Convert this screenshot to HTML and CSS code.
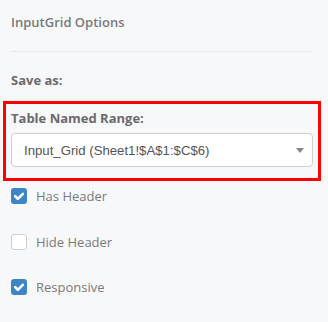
FILE: index.html
```html
<!DOCTYPE html>
<html lang="en">
<head>
  <meta charset="UTF-8" />
  <meta name="viewport" content="width=device-width, initial-scale=1.0"/>
  <title>InputGrid Options</title>
  <link rel="stylesheet" href="styles.css">
</head>
<body>
<div class="panel">
  <h1 class="panel-title">InputGrid Options</h1>
  <hr class="divider">
  <div class="section-label">Save as:</div>
  <div class="field highlight">
    <label class="field-label">Table Named Range:</label>
    <div class="select">
      <span class="select-value">Input_Grid (Sheet1!$A$1:$C$6)</span>
      <span class="caret"></span>
    </div>
  </div>
  <div class="checks">
    <label class="check-row">
      <span class="box checked">
        <svg viewBox="0 0 16 16" width="16" height="16"><path d="M4.2 8.2 L6.9 10.8 L11.8 5.8" fill="none" stroke="#fff" stroke-width="2.6" stroke-linecap="round" stroke-linejoin="round"/></svg>
      </span>
      <span class="check-text">Has Header</span>
    </label>
    <label class="check-row">
      <span class="box"></span>
      <span class="check-text">Hide Header</span>
    </label>
    <label class="check-row">
      <span class="box checked">
        <svg viewBox="0 0 16 16" width="16" height="16"><path d="M4.2 8.2 L6.9 10.8 L11.8 5.8" fill="none" stroke="#fff" stroke-width="2.6" stroke-linecap="round" stroke-linejoin="round"/></svg>
      </span>
      <span class="check-text">Responsive</span>
    </label>
  </div>
</div>
</body>
</html>
```
FILE: styles.css
```css
body {
  margin: 0;
  padding: 0;
  background-color: #f7f8fa;
  font-family: "Open Sans", Arial, sans-serif;
  font-size: 13px;
}
.panel {
  padding: 13px 15px 0 11px;
}
.panel-title {
  margin: 0;
  font-size: 13px;
  font-weight: 600;
  line-height: 19px;
  color: #7a7a7a;
}
.divider {
  margin: 19px 0 0 0;
  border: none;
  border-top: 1px solid #e6e7ea;
  height: 0;
}
.section-label {
  margin-top: 19px;
  line-height: 19px;
  font-weight: 700;
  color: #6b6b6b;
}
.field {
  display: flex;
  flex-direction: column;
}
.highlight {
  margin: 11px -8px 0 -8px;
  padding: 5px 5px 11px 5px;
  border: 3px solid #ff0000;
}
.field-label {
  line-height: 19px;
  font-weight: 700;
  color: #6b6b6b;
}
.select {
  margin-top: 5px;
  height: 32px;
  display: flex;
  align-items: center;
  justify-content: space-between;
  padding: 0 8px 0 12px;
  background-color: #fff;
  border: 1px solid #cfcfcf;
  border-radius: 4px;
}
.select-value {
  font-family: "Liberation Sans", Arial, sans-serif;
  font-size: 13.2px;
  color: #555;
}
.caret {
  width: 0;
  height: 0;
  border-left: 4px solid transparent;
  border-right: 4px solid transparent;
  border-top: 5px solid #888;
}
.checks {
  display: flex;
  flex-direction: column;
  gap: 29.5px;
  margin-top: 7px;
}
.check-row {
  display: flex;
  align-items: center;
  height: 16px;
}
.box {
  width: 16px;
  height: 16px;
  box-sizing: border-box;
  border: 1px solid #cfcfcf;
  border-radius: 3px;
  background-color: #fff;
  display: flex;
}
.box.checked {
  border: none;
  background-color: #3d85c6;
}
.check-text {
  margin-left: 9px;
  color: #7a7a7a;
}
```
